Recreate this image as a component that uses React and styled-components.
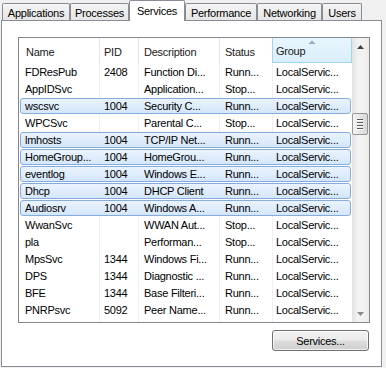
import React from "react";
import styled, { createGlobalStyle } from "styled-components";

const GlobalStyle = createGlobalStyle`
  html, body { margin: 0; padding: 0; background: #f0f0f0; }
  body {
    font-family: "Liberation Sans", Arial, sans-serif;
    font-size: 11px;
    color: #000;
  }
  * { box-sizing: border-box; }
`;

const Window = styled.div`
  width: 386px;
  height: 368px;
  display: flex;
  flex-direction: column;
  background: #f0f0f0;
  overflow: hidden;
  letter-spacing: -0.25px;
`;

const TabStrip = styled.div`
  display: flex;
  align-items: flex-end;
  height: 20px;
  padding-left: 2px;
  position: relative;
  z-index: 1;
`;

const Tab = styled.div`
  width: ${(p) => p.$w}px;
  height: ${(p) => (p.$active ? 21 : 17)}px;
  margin-bottom: ${(p) => (p.$active ? -1 : 0)}px;
  border: 1px solid #898c95;
  border-bottom: none;
  border-radius: 2px 2px 0 0;
  background: ${(p) =>
    p.$active ? "#ffffff" : "linear-gradient(#f4f4f4, #e6e6e6)"};
  display: flex;
  align-items: center;
  justify-content: center;
  padding-top: ${(p) => (p.$active ? 0 : 1)}px;
  white-space: nowrap;
`;

const Panel = styled.div`
  flex: 1;
  margin: 0 4px 1px 1px;
  border: 1px solid #898c95;
  background: #ffffff;
  padding: 16px 11px 0 16px;
  display: flex;
  flex-direction: column;
`;

const ListView = styled.div`
  height: 286px;
  border: 1px solid #828790;
  display: flex;
  background: #fff;
`;

const Content = styled.div`
  width: 333px;
  display: flex;
  flex-direction: column;
  overflow: hidden;
`;

const Header = styled.div`
  height: 26px;
  display: flex;
`;

const HeaderCell = styled.div`
  position: relative;
  width: ${(p) => p.$w}px;
  padding-left: ${(p) => p.$pl}px;
  padding-top: 2px;
  display: flex;
  align-items: center;
  white-space: nowrap;
  color: #1a1a1a;
  border-left: 1px solid ${(p) => (p.$line ? "#e5e5e5" : "transparent")};
  ${(p) =>
    p.$sorted &&
    `
    background: linear-gradient(#e9f6fd, #d9eefa);
    border: 1px solid #9fd4f2;
    border-top: none;
    margin-bottom: 1px;
  `}
`;

const SortArrow = styled.svg`
  position: absolute;
  top: 2px;
  left: 50%;
  margin-left: -4px;
`;

const Body = styled.div`
  flex: 1;
  overflow: hidden;
  background:
    linear-gradient(#edf1f7, #edf1f7) 80px 0 / 1px 100% no-repeat,
    linear-gradient(#edf1f7, #edf1f7) 119px 0 / 1px 100% no-repeat,
    linear-gradient(#edf1f7, #edf1f7) 200px 0 / 1px 100% no-repeat,
    linear-gradient(#edf1f7, #edf1f7) 253px 0 / 1px 100% no-repeat,
    #fff;
`;

const Row = styled.div`
  height: 16px;
  margin: 0 1px 1px 1px;
  display: flex;
  align-items: center;
  border: 1px solid ${(p) => (p.$sel ? "#84acdd" : "transparent")};
  border-radius: 3px;
  background: ${(p) =>
    p.$sel ? "linear-gradient(#eaf3fd, #d5e6fa)" : "transparent"};
`;

const Cell = styled.div`
  width: ${(p) => p.$w}px;
  padding-left: ${(p) => p.$pl}px;
  white-space: nowrap;
  overflow: hidden;
  line-height: 14px;
`;

const Scrollbar = styled.div`
  width: 17px;
  display: flex;
  flex-direction: column;
  background: linear-gradient(90deg, #e3e3e3 0, #f2f2f2 35%, #f2f2f2 70%, #eaeaea 100%);
`;

const ScrollButton = styled.div`
  height: 17px;
  display: flex;
  align-items: center;
  justify-content: center;
`;

const Track = styled.div`
  flex: 1;
  display: flex;
  flex-direction: column;
`;

const Thumb = styled.div`
  margin-top: 58px;
  width: 16px;
  height: 22px;
  border: 1px solid #979797;
  border-radius: 2px;
  background: linear-gradient(90deg, #f4f4f4, #e6e6e6 50%, #d9d9d9);
  display: flex;
  flex-direction: column;
  align-items: center;
  justify-content: center;
  gap: 1px;
`;

const Grip = styled.div`
  width: 6px;
  height: 1px;
  background: #5a5a5a;
  box-shadow: 0 1px 0 #ffffff;
  margin-bottom: 1px;
`;

const ButtonRow = styled.div`
  display: flex;
  justify-content: flex-end;
  margin-top: 7px;
  padding-right: 1px;
`;

const Button = styled.button`
  width: 97px;
  height: 21px;
  border: 1px solid #707070;
  border-radius: 3px;
  background: linear-gradient(#f2f2f2 0%, #ebebeb 48%, #dddddd 52%, #cfcfcf 100%);
  box-shadow: inset 0 0 0 1px rgba(255, 255, 255, 0.7);
  font-family: inherit;
  font-size: 11px;
  letter-spacing: -0.25px;
  color: #000;
  padding: 0;
`;

const tabs = [
  { label: "Applications", w: 68 },
  { label: "Processes", w: 59 },
  { label: "Services", w: 56, active: true },
  { label: "Performance", w: 72 },
  { label: "Networking", w: 65 },
  { label: "Users", w: 40 },
];

const headerCols = [
  { label: "Name", w: 80, pl: 6 },
  { label: "PID", w: 39, pl: 4, line: true },
  { label: "Description", w: 81, pl: 5, line: true },
  { label: "Status", w: 53, pl: 5, line: true },
  { label: "Group", w: 80, pl: 3, line: true, sorted: true },
];

const cellCols = [
  { w: 78, pl: 4 },
  { w: 39, pl: 5 },
  { w: 81, pl: 6 },
  { w: 53, pl: 6 },
  { w: 78, pl: 4 },
];

const rows = [
  ["FDResPub", "2408", "Function Di...", "Runn...", "LocalServic...", false],
  ["AppIDSvc", "", "Application...", "Stop...", "LocalServic...", false],
  ["wscsvc", "1004", "Security C...", "Runn...", "LocalServic...", true],
  ["WPCSvc", "", "Parental C...", "Stop...", "LocalServic...", false],
  ["lmhosts", "1004", "TCP/IP Net...", "Runn...", "LocalServic...", true],
  ["HomeGroup...", "1004", "HomeGrou...", "Runn...", "LocalServic...", true],
  ["eventlog", "1004", "Windows E...", "Runn...", "LocalServic...", true],
  ["Dhcp", "1004", "DHCP Client", "Runn...", "LocalServic...", true],
  ["Audiosrv", "1004", "Windows A...", "Runn...", "LocalServic...", true],
  ["WwanSvc", "", "WWAN Aut...", "Stop...", "LocalServic...", false],
  ["pla", "", "Performan...", "Stop...", "LocalServic...", false],
  ["MpsSvc", "1344", "Windows Fi...", "Runn...", "LocalServic...", false],
  ["DPS", "1344", "Diagnostic ...", "Runn...", "LocalServic...", false],
  ["BFE", "1344", "Base Filteri...", "Runn...", "LocalServic...", false],
  ["PNRPsvc", "5092", "Peer Name...", "Runn...", "LocalServic...", false],
];

export default function App() {
  return (
    <>
      <GlobalStyle />
      <Window>
        <TabStrip>
          {tabs.map((t) => (
            <Tab key={t.label} $w={t.w} $active={t.active}>
              {t.label}
            </Tab>
          ))}
        </TabStrip>
        <Panel>
          <ListView>
            <Content>
              <Header>
                {headerCols.map((c) => (
                  <HeaderCell
                    key={c.label}
                    $w={c.w}
                    $pl={c.pl}
                    $line={c.line}
                    $sorted={c.sorted}
                  >
                    {c.sorted && (
                      <SortArrow width="8" height="4" viewBox="0 0 8 4">
                        <path d="M0.5 4 L4 0.5 L7.5 4 Z" fill="#97aac2" />
                      </SortArrow>
                    )}
                    {c.label}
                  </HeaderCell>
                ))}
              </Header>
              <Body>
                {rows.map((r) => (
                  <Row key={r[0]} $sel={r[5]}>
                    {cellCols.map((c, i) => (
                      <Cell key={i} $w={c.w} $pl={c.pl}>
                        {r[i]}
                      </Cell>
                    ))}
                  </Row>
                ))}
              </Body>
            </Content>
            <Scrollbar>
              <ScrollButton>
                <svg width="7" height="4" viewBox="0 0 7 4">
                  <path d="M0 4 L3.5 0 L7 4 Z" fill="#404040" />
                </svg>
              </ScrollButton>
              <Track>
                <Thumb>
                  <Grip />
                  <Grip />
                  <Grip />
                  <Grip />
                </Thumb>
              </Track>
              <ScrollButton>
                <svg width="7" height="4" viewBox="0 0 7 4">
                  <path d="M0 0 L7 0 L3.5 4 Z" fill="#8a8a8a" />
                </svg>
              </ScrollButton>
            </Scrollbar>
          </ListView>
          <ButtonRow>
            <Button>Services...</Button>
          </ButtonRow>
        </Panel>
      </Window>
    </>
  );
}
